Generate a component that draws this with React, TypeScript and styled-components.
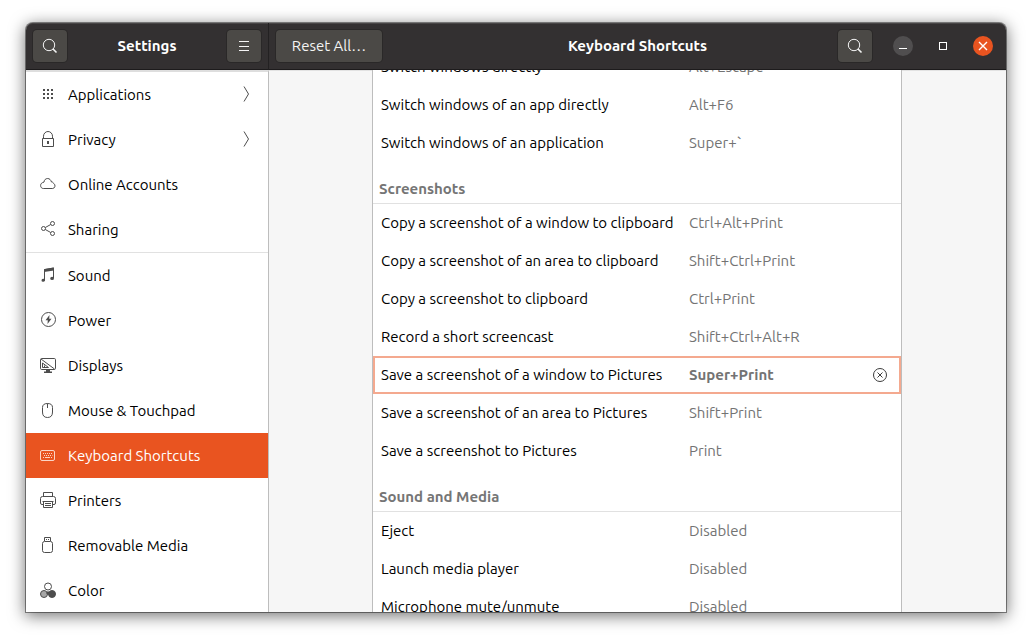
import React from "react";
import styled, { createGlobalStyle, css } from "styled-components";

const GlobalStyle = createGlobalStyle`
  *, *::before, *::after { box-sizing: border-box; }
  body {
    margin: 0;
    background: #fff;
    color: #000;
    font-family: Ubuntu, "Noto Sans", sans-serif;
    font-size: 15px;
    line-height: 20px;
  }
  button { font: inherit; }
`;

const Desktop = styled.div`
  height: 100vh;
  padding: 23px 26px 29px;
  overflow: hidden;
`;

const Window = styled.div`
  display: grid;
  grid-template-columns: 243px minmax(0, 1fr);
  grid-template-rows: 47px minmax(0, 1fr);
  height: 100%;
  border-radius: 7px 7px 0 0;
  background: #f6f6f6;
  box-shadow: 0 0 0 1px rgba(0, 0, 0, 0.42), 0 3px 16px 1px rgba(0, 0, 0, 0.55);
`;

const headerBar = css`
  background: #333031;
  color: #fff;
  border-bottom: 1px solid #1d1b1c;
  box-shadow: inset 0 1px #484546;
`;

const SidebarHeader = styled.header`
  ${headerBar}
  display: flex;
  align-items: center;
  justify-content: space-between;
  padding: 0 7px;
  border-right: 1px solid #232122;
  border-top-left-radius: 7px;
`;

const MainHeader = styled.header`
  ${headerBar}
  display: grid;
  grid-template-columns: 1fr auto 1fr;
  align-items: center;
  padding: 0 7px;
  border-top-right-radius: 7px;
`;

const Title = styled.h1`
  margin: 0;
  font-size: 15px;
  font-weight: 700;
`;

const HeaderButton = styled.button<{ $wide?: boolean }>`
  display: flex;
  align-items: center;
  justify-content: center;
  justify-self: start;
  width: ${(p) => (p.$wide ? "106px" : "34px")};
  height: 32px;
  padding: 0;
  border: 0;
  border-radius: 4px;
  background: #4b4946;
  color: #f4f4f4;
  box-shadow: 0 0 0 1px #2a2828;
`;

const HeaderEnd = styled.div`
  display: flex;
  align-items: center;
  justify-content: flex-end;
  gap: 21px;
  margin-right: 6px;
`;

const WindowControls = styled.div`
  display: flex;
  gap: 20px;
`;

const WindowButton = styled.button<{ $fill?: string }>`
  display: flex;
  width: 20px;
  height: 20px;
  padding: 0;
  border: 0;
  border-radius: 50%;
  background: ${(p) => p.$fill ?? "transparent"};
  color: #fff;
`;

const Sidebar = styled.nav`
  overflow: hidden;
  border-top: 2px solid #dedede;
  border-right: 1px solid #bdbdbd;
  background: #fff;
`;

const NavGroup = styled.ul`
  margin: 0;
  padding: 0;
  list-style: none;
  & + & { border-top: 1px solid #e1e1e1; }
`;

const NavLink = styled.a<{ $active?: boolean }>`
  display: flex;
  align-items: center;
  gap: 12px;
  height: 45px;
  padding: 0 16px 0 14px;
  color: ${(p) => (p.$active ? "#fff" : "#000")};
  background: ${(p) => (p.$active ? "#e95420" : "transparent")};
  line-height: 21px;
  text-decoration: none;
  svg {
    flex: none;
    margin-bottom: 1px;
    color: ${(p) => (p.$active ? "#fbd5c6" : "#4d4d4d")};
  }
`;

const NavLabel = styled.span`
  flex: 1;
`;

const Main = styled.main`
  display: flex;
  justify-content: center;
  overflow: hidden;
  padding-right: 1px;
  box-shadow: inset 0 1px #e2e2e2;
`;

const Panel = styled.div`
  flex: 0 1 530px;
  border: solid #bdbdbd;
  border-width: 0 1px;
  background: #fff;
`;

const Table = styled.table`
  width: 100%;
  margin-top: -22px;
  border-collapse: separate;
  border-spacing: 0;
  table-layout: fixed;
`;

const SectionHeading = styled.th`
  height: 42px;
  padding: 12px 6px 0;
  border-bottom: 1px solid #e1e1e1;
  color: #757575;
  font-weight: 700;
  text-align: left;
`;

const Row = styled.tr<{ $selected?: boolean }>`
  height: 38px;
  ${(p) =>
    p.$selected &&
    css`
      outline: 2px solid #f4a98f;
      outline-offset: -2px;
    `}
`;

const NameCell = styled.th`
  padding: 0 0 0 8px;
  font-weight: 400;
  text-align: left;
  white-space: nowrap;
`;

const KeyCell = styled.td<{ $bold?: boolean }>`
  padding: 0 0 0 8px;
  color: #737373;
  font-weight: ${(p) => (p.$bold ? 700 : 400)};
`;

const ActionCell = styled.td`
  padding: 0 13px 0 0;
`;

const ClearButton = styled.button`
  display: flex;
  margin-left: auto;
  padding: 0;
  border: 0;
  background: none;
  color: #3c3c3c;
`;

function Icon({ children, size = 16 }: { children: React.ReactNode; size?: number }) {
  return (
    <svg
      width={size}
      height={size}
      viewBox={`0 0 ${size} ${size}`}
      fill="none"
      stroke="currentColor"
      strokeWidth="1"
      aria-hidden="true"
    >
      {children}
    </svg>
  );
}

const SearchIcon = () => (
  <Icon>
    <circle cx="7" cy="7" r="5.7" />
    <path d="M11 11l3.500 3.500" strokeWidth="1.600" />
  </Icon>
);

const solid = { fill: "currentColor", stroke: "none" };

const icons: Record<string, React.ReactNode> = {
  Applications: (
    <g {...solid}>
      {[3, 7, 11].map((y) => [3, 7, 11].map((x) => <rect key={`${x}-${y}`} x={x} y={y} width="2" height="2" />))}
    </g>
  ),
  Privacy: (
    <>
      <path d="M2.500 7.500h11v8h-11zM3.500 7.500V5.200a4.500 4.700 0 0 1 9 0V7.500" />
      <path d="M7 10h2v3H7z" {...solid} />
    </>
  ),
  "Online Accounts": (
    <path d="M3.300 12.500h9.400a2.700 2.700 0 0 0 .8-5.100c-.3-1-1.100-1.500-2-1.400C10.800 3.900 9.500 2.500 7.700 2.500 5.500 2.500 4.200 4 4 6.100 2 6.500.6 7.600.6 9.500c0 1.800 1.200 3 2.700 3z" />
  ),
  Sharing: (
    <>
      <circle cx="3.500" cy="7.500" r="2" />
      <circle cx="12.500" cy="2.500" r="2" />
      <circle cx="12.500" cy="12.500" r="2" />
      <path d="M5.300 6.500l5.400-3M5.300 8.500l5.400 3" />
    </>
  ),
  Sound: (
    <>
      <path d="M4.500 13V2.500l9-1.500v10" />
      <path d="M4 2.200L14 .6v2.800L4 5zM1.500 13.200a1.800 1.500 0 0 1 3.500-.4 1.800 1.500 0 1 1-3.500.4zM10.200 11.400a1.900 1.600 0 1 1 3.800 0 1.900 1.600 0 0 1-3.800 0z" {...solid} />
    </>
  ),
  Power: (
    <>
      <circle cx="8.500" cy="7.500" r="7" />
      <path d="M9.500 3L5.500 8.300h2.300L7.500 12l4-5.300H9.200z" {...solid} />
    </>
  ),
  Displays: (
    <>
      <rect x=".5" y="1.500" width="15" height="11" rx="1.200" />
      <path d="M1 2l13.500 10M2.500 6v4.500h6zM4.500 8.500v2" />
      <path d="M6 12h4v2.500h2V16H4v-1.500h2z" {...solid} />
    </>
  ),
  "Mouse & Touchpad": (
    <path d="M7.500 1.500C4 1.500 2.500 3 2.500 5.500v4.500c0 3.500 1.500 5.500 5 5.500s5-2 5-5.500V5.500c0-2.500-1.500-4-5-4zM7.500 1.500V6" />
  ),
  "Keyboard Shortcuts": (
    <>
      <rect x=".5" y="3.500" width="14" height="10" rx="1.500" />
      <path d="M3 6.500h9.500M4 8.500h8.500" strokeDasharray="1 1" />
      <path d="M3 10.500h1M5 10.500h5M11 10.500h1" />
    </>
  ),
  Printers: (
    <>
      <path d="M3.500 4V.5h9V4M3.500 12.500H2A1.500 1.500 0 0 1 .5 11V6.500a2 2 0 0 1 2-2h11a2 2 0 0 1 2 2V11a1.500 1.500 0 0 1-1.500 1.500h-1.500" />
      <path d="M3.500 10v5.500h9V10M2.500 9.500h11M5 11.500h6M5 13.500h6" />
    </>
  ),
  "Removable Media": (
    <>
      <path d="M4.500 4V.5h6V4" />
      <rect x="2.500" y="4.500" width="10" height="11" rx="2" />
      <path d="M6 2h1v1H6zM8 2h1v1H8z" {...solid} />
    </>
  ),
  Color: (
    <>
      <circle cx="4" cy="12" r="3.500" fill="#a6a6a6" />
      <circle cx="12" cy="12" r="3.500" fill="currentColor" />
      <circle cx="8" cy="4.500" r="3.500" fill="#fff" />
      <circle cx="8" cy="11" r="1.200" fill="currentColor" />
    </>
  ),
};

const navGroups = [
  ["Applications", "Privacy", "Online Accounts", "Sharing"],
  [
    "Sound",
    "Power",
    "Displays",
    "Mouse & Touchpad",
    "Keyboard Shortcuts",
    "Printers",
    "Removable Media",
    "Color",
  ],
];

const withSubmenu = ["Applications", "Privacy"];

const sections: { title?: string; rows: [string, string][] }[] = [
  {
    rows: [
      ["Switch windows directly", "Alt+Escape"],
      ["Switch windows of an app directly", "Alt+F6"],
      ["Switch windows of an application", "Super+`"],
    ],
  },
  {
    title: "Screenshots",
    rows: [
      ["Copy a screenshot of a window to clipboard", "Ctrl+Alt+Print"],
      ["Copy a screenshot of an area to clipboard", "Shift+Ctrl+Print"],
      ["Copy a screenshot to clipboard", "Ctrl+Print"],
      ["Record a short screencast", "Shift+Ctrl+Alt+R"],
      ["Save a screenshot of a window to Pictures", "Super+Print"],
      ["Save a screenshot of an area to Pictures", "Shift+Print"],
      ["Save a screenshot to Pictures", "Print"],
    ],
  },
  {
    title: "Sound and Media",
    rows: [
      ["Eject", "Disabled"],
      ["Launch media player", "Disabled"],
      ["Microphone mute/unmute", "Disabled"],
    ],
  },
];

const customised = "Save a screenshot of a window to Pictures";

export default function App() {
  return (
    <>
      <GlobalStyle />
      <Desktop>
        <Window>
          <SidebarHeader>
            <HeaderButton aria-label="Search settings">
              <SearchIcon />
            </HeaderButton>
            <Title>Settings</Title>
            <HeaderButton aria-label="Menu">
              <Icon>
                <path d="M3 3.500h10M3 8.500h10M3 12.500h10" />
              </Icon>
            </HeaderButton>
          </SidebarHeader>
          <MainHeader>
            <HeaderButton $wide>Reset All…</HeaderButton>
            <Title as="h2">Keyboard Shortcuts</Title>
            <HeaderEnd>
              <HeaderButton aria-label="Search shortcuts">
                <SearchIcon />
              </HeaderButton>
              <WindowControls>
                <WindowButton $fill="#504e4f" aria-label="Minimize">
                  <Icon size={20}>
                    <path d="M6 12.500h8" />
                  </Icon>
                </WindowButton>
                <WindowButton aria-label="Maximize">
                  <Icon size={20}>
                    <rect x="6.500" y="6.500" width="7" height="7" />
                  </Icon>
                </WindowButton>
                <WindowButton $fill="#e95420" aria-label="Close">
                  <Icon size={20}>
                    <path d="M6 6l8 8M14 6l-8 8" strokeWidth="1.400" />
                  </Icon>
                </WindowButton>
              </WindowControls>
            </HeaderEnd>
          </MainHeader>
          <Sidebar aria-label="Settings">
            {navGroups.map((group) => (
              <NavGroup key={group[0]}>
                {group.map((name) => (
                  <li key={name}>
                    <NavLink href="#" $active={name === "Keyboard Shortcuts"}>
                      <Icon>{icons[name]}</Icon>
                      <NavLabel>{name}</NavLabel>
                      {withSubmenu.includes(name) && (
                        <Icon>
                          <path d="M8 .5L12.500 8 8 15.500" />
                        </Icon>
                      )}
                    </NavLink>
                  </li>
                ))}
              </NavGroup>
            ))}
          </Sidebar>
          <Main>
            <Panel>
              <Table>
                <colgroup>
                  <col style={{ width: 308 }} />
                  <col />
                  <col style={{ width: 48 }} />
                </colgroup>
                {sections.map((section, i) => (
                  <tbody key={i}>
                    {section.title && (
                      <tr>
                        <SectionHeading colSpan={3} scope="rowgroup">
                          {section.title}
                        </SectionHeading>
                      </tr>
                    )}
                    {section.rows.map(([name, keys]) => (
                      <Row key={name} $selected={name === customised}>
                        <NameCell scope="row">{name}</NameCell>
                        <KeyCell $bold={name === customised}>{keys}</KeyCell>
                        <ActionCell>
                          {name === customised && (
                            <ClearButton aria-label="Reset shortcut">
                              <Icon>
                                <circle cx="8" cy="8" r="6.500" />
                                <path d="M5.500 5.500l5 5M10.500 5.500l-5 5" />
                              </Icon>
                            </ClearButton>
                          )}
                        </ActionCell>
                      </Row>
                    ))}
                  </tbody>
                ))}
              </Table>
            </Panel>
          </Main>
        </Window>
      </Desktop>
    </>
  );
}
